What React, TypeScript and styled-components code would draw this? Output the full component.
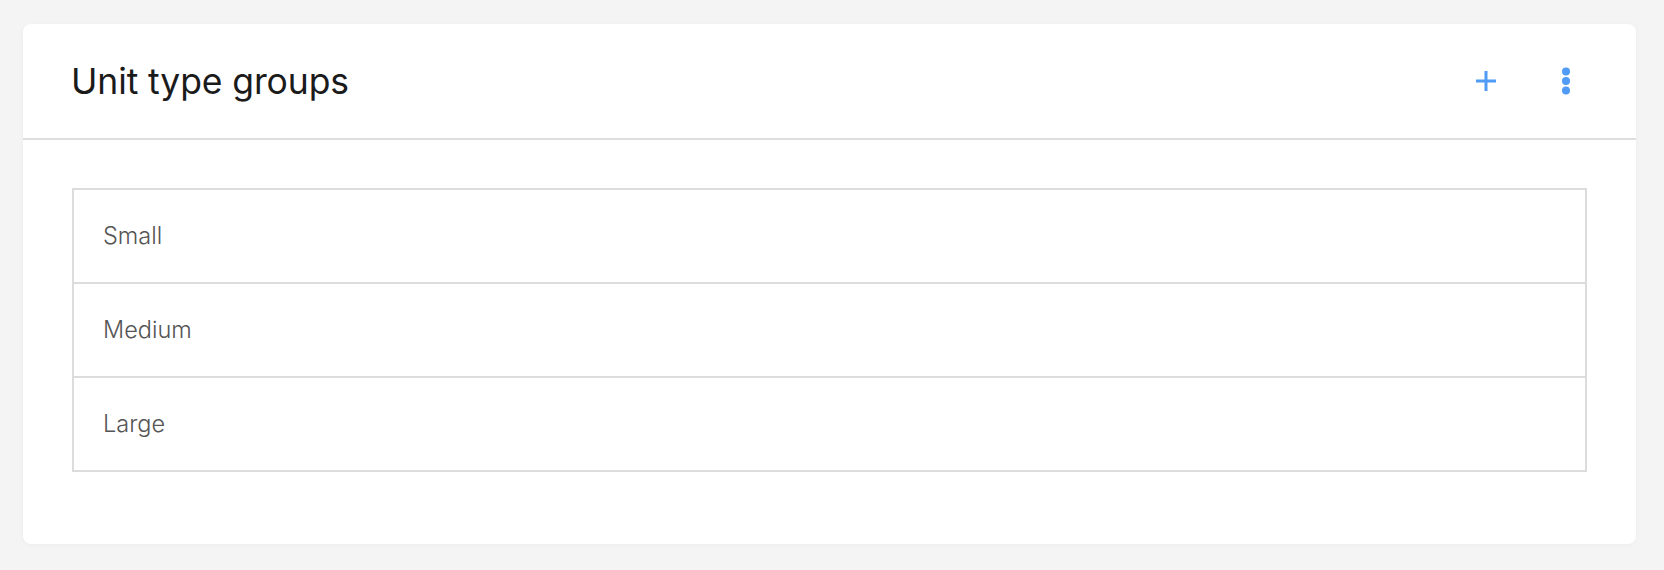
import React from "react";
import styled, { createGlobalStyle } from "styled-components";

const Global = createGlobalStyle`
  html, body { margin: 0; padding: 0; background: #f4f4f4; }
  body { font-family: Inter, "Noto Sans", sans-serif; }
  * { box-sizing: border-box; }
`;

const Page = styled.div`
  padding: 24px 28px 26px 23px;
`;

const Card = styled.section`
  background: #fff;
  border-radius: 8px;
  box-shadow: 0 1px 4px rgba(0, 0, 0, 0.04);
  height: 520px;
  display: flex;
  flex-direction: column;
`;

const Header = styled.header`
  height: 116px;
  border-bottom: 2px solid #dedede;
  display: flex;
  align-items: center;
  padding: 0 50px 0 48px;
`;

const Title = styled.h1`
  margin: 0;
  flex: 1;
  font-size: 35.5px;
  font-weight: 400;
  color: #1b1b1b;
  letter-spacing: -0.1px;
`;

const Actions = styled.div`
  display: flex;
  align-items: center;
  gap: 40px;
`;

const IconButton = styled.button`
  width: 40px;
  height: 40px;
  padding: 0;
  border: 0;
  background: transparent;
  display: flex;
  align-items: center;
  justify-content: center;
  cursor: pointer;
  color: #4f9bf5;
`;

const Body = styled.div`
  padding: 48px 49px;
`;

const List = styled.ul`
  list-style: none;
  margin: 0;
  padding: 0;
  border: 2px solid #dcdcdc;
`;

const Row = styled.li`
  box-sizing: content-box;
  height: 90px;
  display: flex;
  align-items: center;
  padding: 0 29px 2px;
  font-size: 23.5px;
  font-weight: 300;
  color: #555;
  & + & {
    border-top: 2px solid #dcdcdc;
  }
`;

const PlusIcon = () => (
  <svg width="22" height="22" viewBox="0 0 22 22">
    <path d="M11 1v20M1 11h20" stroke="currentColor" strokeWidth="3" />
  </svg>
);

const DotsIcon = () => (
  <svg width="10" height="28" viewBox="0 0 10 28">
    <circle cx="5" cy="4.5" r="4" fill="currentColor" />
    <circle cx="5" cy="14" r="4" fill="currentColor" />
    <circle cx="5" cy="23.5" r="4" fill="currentColor" />
  </svg>
);

const groups = ["Small", "Medium", "Large"];

export default function App() {
  return (
    <>
      <Global />
      <Page>
        <Card>
          <Header>
            <Title>Unit type groups</Title>
            <Actions>
              <IconButton aria-label="Add">
                <PlusIcon />
              </IconButton>
              <IconButton aria-label="More">
                <DotsIcon />
              </IconButton>
            </Actions>
          </Header>
          <Body>
            <List>
              {groups.map((g) => (
                <Row key={g}>{g}</Row>
              ))}
            </List>
          </Body>
        </Card>
      </Page>
    </>
  );
}
